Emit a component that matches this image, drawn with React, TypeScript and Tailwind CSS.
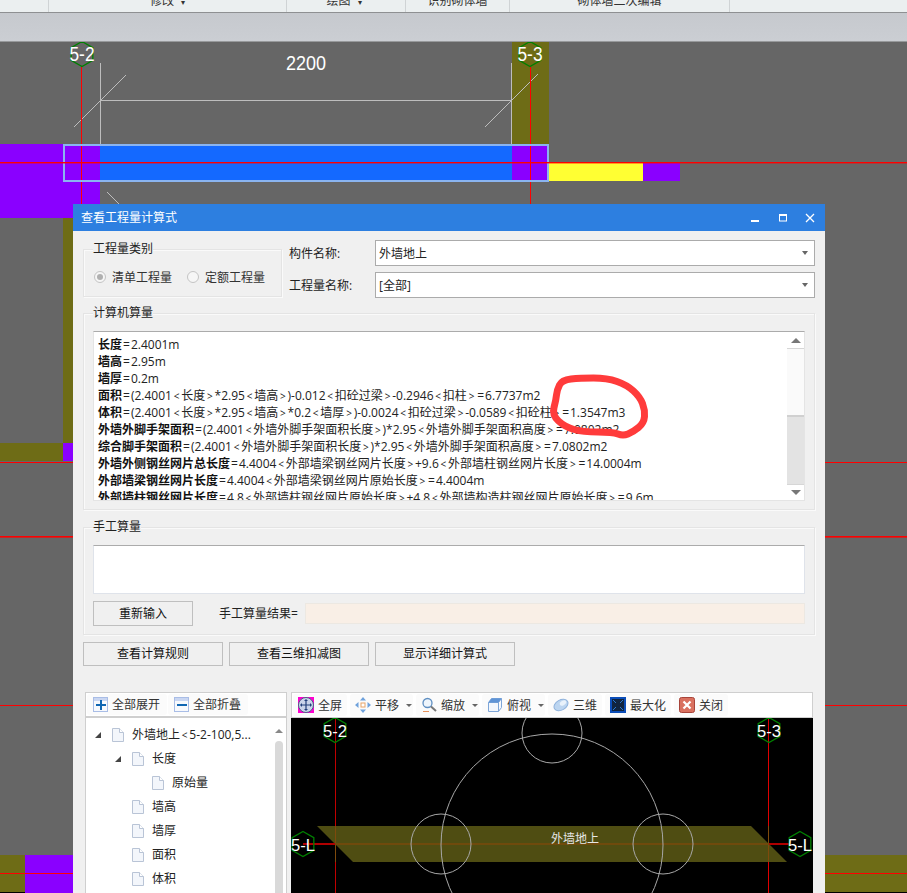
import React from "react";

const hex = (cx: number, cy: number, r = 12.5) =>
  [0, 1, 2, 3, 4, 5]
    .map((i) => {
      const a = (Math.PI / 3) * i - Math.PI / 2;
      return `${cx + r * Math.cos(a)},${cy + r * Math.sin(a)}`;
    })
    .join(" ");

function Axis({ x, y, label, size = 20, len = 25 }: { x: number; y: number; label: string; size?: number; len?: number }) {
  return (
    <g>
      <polygon points={hex(x, y)} fill="none" stroke="#008000" strokeWidth="1.3" />
      <text x={x} y={y + 7} textAnchor="middle" fill="#fff" fontSize={size} textLength={len} lengthAdjust="spacingAndGlyphs" fontFamily="Liberation Sans, sans-serif">
        {label}
      </text>
    </g>
  );
}

function Canvas() {
  return (
    <svg viewBox="0 42 907 851" width="907" height="851" className="block">
      <rect x="0" y="42" width="907" height="851" fill="#666666" />
      <rect x="512" y="42" width="37" height="102" fill="#6e6c16" />
      <rect x="63" y="218" width="10" height="225" fill="#6e6c16" />
      <rect x="0" y="443" width="63" height="18" fill="#6e6c16" />
      <rect x="63" y="443" width="10" height="18" fill="#8a00ff" />
      <rect x="0" y="144" width="63" height="74" fill="#8a00ff" />
      <rect x="63" y="144" width="37" height="74" fill="#8a00ff" />
      <rect x="100" y="144" width="412" height="37" fill="#1469ff" />
      <rect x="512" y="144" width="37" height="37" fill="#8a00ff" />
      <rect x="549" y="163" width="94" height="18" fill="#ffff33" />
      <rect x="643" y="163" width="37" height="18" fill="#8a00ff" />
      <rect x="0" y="855" width="25" height="37" fill="#6e6c16" />
      <rect x="825" y="855" width="82" height="37" fill="#6e6c16" />
      <rect x="0" y="892" width="25" height="1" fill="#000" />
      <rect x="825" y="892" width="82" height="1" fill="#000" />
      <rect x="25" y="855" width="48" height="38" fill="#8a00ff" />
      <line x1="100.5" y1="63" x2="100.5" y2="144" stroke="#bdbdbd" />
      <line x1="511.5" y1="63" x2="511.5" y2="144" stroke="#bdbdbd" />
      <line x1="100" y1="100.5" x2="511" y2="100.5" stroke="#bdbdbd" />
      <line x1="126" y1="75" x2="74" y2="127" stroke="#bdbdbd" />
      <line x1="538" y1="74" x2="485" y2="127" stroke="#bdbdbd" />
      <line x1="107" y1="192" x2="119" y2="204" stroke="#bdbdbd" />
      <line x1="81.5" y1="66" x2="81.5" y2="204" stroke="#ff0000" />
      <line x1="530.5" y1="66" x2="530.5" y2="204" stroke="#ff0000" />
      <rect x="64" y="145" width="484" height="36" fill="none" stroke="#8ab4f0" strokeWidth="2" />
      <rect x="0" y="162" width="907" height="1.4" fill="#ff0000" />
      <rect x="0" y="462" width="907" height="1" fill="#ff0000" />
      <rect x="0" y="536" width="907" height="1.6" fill="#ff0000" />
      <rect x="0" y="705" width="907" height="1" fill="#ff0000" />
      <rect x="0" y="873" width="907" height="1" fill="#ff0000" />
      <Axis x={82} y={54} label="5-2" />
      <Axis x={530} y={54} label="5-3" />
      <text x="306" y="70" textAnchor="middle" fill="#fff" fontSize="21" textLength="40" lengthAdjust="spacingAndGlyphs" fontFamily="Liberation Sans, sans-serif">2200</text>
    </svg>
  );
}

function Viewer() {
  return (
    <svg viewBox="291 718 522 175" width="522" height="175" className="block bg-black">
      <polygon points="317,826 751,826 787,862 353,862" fill="#4f4d12" />
      <rect x="335" y="718" width="1" height="175" fill="#c00000" />
      <rect x="768" y="718" width="1" height="175" fill="#e00000" />
      <rect x="335" y="826" width="1" height="36" fill="#7f4a0c" />
      <rect x="768" y="826" width="1" height="36" fill="#7f4a0c" />
      <rect x="303" y="843" width="32" height="2" fill="#b00000" />
      <rect x="335" y="843" width="434" height="2" fill="#6f4a0c" />
      <rect x="769" y="843" width="20" height="2" fill="#b00000" />
      <g fill="none" stroke="#a8a8a8">
        <circle cx="441" cy="844" r="30" />
        <circle cx="663" cy="844" r="30" />
        <circle cx="552" cy="733" r="30" />
        <circle cx="552" cy="845" r="111" />
      </g>
      <Axis x={335} y={730} label="5-2" size={17} len={24} />
      <Axis x={769} y={730} label="5-3" size={17} len={24} />
      <Axis x={303} y={844} label="5-L" size={17} len={24} />
      <Axis x={800} y={844} label="5-L" size={17} len={24} />
      <text x="575" y="843" textAnchor="middle" fill="#e6e6e6" fontSize="12" fontFamily="Noto Sans CJK SC, sans-serif">外墙地上</text>
    </svg>
  );
}

function Group({ title, className, children }: { title: string; className: string; children?: React.ReactNode }) {
  return (
    <div className={`relative border border-[#e4e4e4] shadow-[inset_1px_1px_0_#fafafa,1px_1px_0_#fafafa] ${className}`}>
      <span className="absolute left-[9px] top-[-9px] bg-[#f0f0f0] leading-[16px] text-[#222]">{title}</span>
      {children}
    </div>
  );
}

function Select({ value }: { value: string }) {
  return (
    <div className="flex h-[26px] w-[440px] items-center justify-between border border-[#ababab] bg-white pl-[3px] pr-[6px] text-[#222]">
      <span className="pt-[1px]">{value}</span>
      <span className="h-0 w-0 border-x-[3px] border-t-[4px] border-x-transparent border-t-[#666]" />
    </div>
  );
}

function Radio({ on, label }: { on?: boolean; label: string }) {
  return (
    <div className="flex items-center gap-[6px]">
      <span className="flex h-[12px] w-[12px] items-center justify-center rounded-full border border-[#c4c4c4] bg-[#f6f6f6]">
        {on && <span className="h-[6px] w-[6px] rounded-full bg-[#b0b0b0]" />}
      </span>
      <span className="pt-[1px] text-[#333]">{label}</span>
    </div>
  );
}

// The symbols < > = sit with extra air around them in the reference's font.
function Spaced({ text }: { text: string }) {
  return (
    <>
      {text.split(/([<>=])/).map((t, i) =>
        t === "<" || t === ">" ? (
          <span key={i} className="mx-[1.8px] text-[10px]">{t}</span>
        ) : t === "=" ? (
          <span key={i} className="mx-[1px]">{t}</span>
        ) : (
          <span key={i}>{t}</span>
        )
      )}
    </>
  );
}

const lines: [string, string][] = [
  ["长度", "=2.4001m"],
  ["墙高", "=2.95m"],
  ["墙厚", "=0.2m"],
  ["面积", "=(2.4001<长度>*2.95<墙高>)-0.012<扣砼过梁>-0.2946<扣柱>=6.7737m2"],
  ["体积", "=(2.4001<长度>*2.95<墙高>*0.2<墙厚>)-0.0024<扣砼过梁>-0.0589<扣砼柱>=1.3547m3"],
  ["外墙外脚手架面积", "=(2.4001<外墙外脚手架面积长度>)*2.95<外墙外脚手架面积高度>=7.0802m2"],
  ["综合脚手架面积", "=(2.4001<外墙外脚手架面积长度>)*2.95<外墙外脚手架面积高度>=7.0802m2"],
  ["外墙外侧钢丝网片总长度", "=4.4004<外部墙梁钢丝网片长度>+9.6<外部墙柱钢丝网片长度>=14.0004m"],
  ["外部墙梁钢丝网片长度", "=4.4004<外部墙梁钢丝网片原始长度>=4.4004m"],
  ["外部墙柱钢丝网片长度", "=4.8<外部墙柱钢丝网片原始长度>+4.8<外部墙构造柱钢丝网片原始长度>=9.6m"],
];

function Btn({ label, w }: { label: string; w: string }) {
  return (
    <div className={`flex items-center justify-center border border-[#bfbfbf] bg-[#f0f0f0] text-[#111] ${w}`}>{label}</div>
  );
}

function SqIcon({ plus }: { plus?: boolean }) {
  return (
    <svg width="15" height="15" viewBox="0 0 15 15">
      <rect x="0.5" y="0.5" width="14" height="14" fill="#f7f9fd" stroke="#a9bde6" />
      <rect x="1" y="1" width="13" height="3" fill="#c9d6f2" />
      <rect x="3" y="7" width="10" height="2" fill="#0f66b3" />
      {plus && <rect x="7" y="3" width="2" height="10" fill="#0f66b3" />}
    </svg>
  );
}

function Icon16({ children }: { children: React.ReactNode }) {
  return (
    <svg width="16" height="16" viewBox="0 0 16 16" className="shrink-0">
      {children}
    </svg>
  );
}

const Full = () => (
  <Icon16>
    <rect width="16" height="16" fill="#ff00d0" />
    <circle cx="8" cy="8" r="7.5" fill="#c9d4ea" stroke="#4c5d85" />
    <path d="M8 3v10M3 8h10" stroke="#23407c" strokeWidth="1.2" />
    <path d="M8 2l2 2H6zM8 14l2-2H6zM2 8l2-2v4zM14 8l-2-2v4z" fill="#23407c" />
  </Icon16>
);
const Pan = () => (
  <Icon16>
    <path d="M8 0l3 3.5H5zM8 16l3-3.5H5zM0 8l3.5-3v6zM16 8l-3.5-3v6z" fill="#6fa2dc" />
    <rect x="6" y="6" width="4" height="4" fill="#fff" stroke="#e8a468" />
  </Icon16>
);
const Zoom = () => (
  <Icon16>
    <circle cx="6.5" cy="6" r="4.5" fill="#eef5fc" stroke="#5f8fc2" strokeWidth="1.3" />
    <path d="M10 9.5l5 4.5" stroke="#777" strokeWidth="2" />
    <path d="M2 14.5h6" stroke="#e8925a" />
  </Icon16>
);
const Top = () => (
  <Icon16>
    <path d="M1.5 5.5h10v9h-10zM1.5 5.5l3-4h10l-3 4M11.5 14.5l3-4v-9" fill="#f2f7fd" stroke="#7ea6d8" />
    <path d="M1.5 5.5l3-4h10l-3 4z" fill="#5f94d6" />
  </Icon16>
);
const Three = () => (
  <Icon16>
    <ellipse cx="8" cy="8" rx="7.5" ry="5" transform="rotate(-30 8 8)" fill="#bcd5f0" stroke="#8fb2dc" />
    <ellipse cx="10" cy="6" rx="3.5" ry="2.2" transform="rotate(-30 10 6)" fill="#e9f2fb" />
  </Icon16>
);
const Maxi = () => (
  <Icon16>
    <rect width="16" height="16" fill="#0b4db8" />
    <rect x="2" y="2" width="12" height="12" fill="#10243f" />
    <path d="M3 3l3 3M13 3l-3 3M3 13l3-3M13 13l-3-3" stroke="#2a77d0" />
  </Icon16>
);
const Close = () => (
  <Icon16>
    <rect x="0.5" y="0.5" width="15" height="15" rx="2" fill="#d9705f" stroke="#a8443a" />
    <path d="M4.5 4.5l7 7M11.5 4.5l-7 7" stroke="#fff" strokeWidth="2.2" />
  </Icon16>
);

function Tool({ icon, label, caret }: { icon: React.ReactNode; label: string; caret?: boolean }) {
  return (
    <div className={`flex h-[22px] items-center rounded-[3px] bg-[#fbfbfb] pl-[5px] ${caret ? "pr-[1px]" : "pr-[5px]"}`}>
      {icon}
      <span className="ml-[4px] pt-[1px] text-[#333]">{label}</span>
      {caret && <span className="ml-[7px] h-0 w-0 border-x-[3px] border-t-[3px] border-x-transparent border-t-[#666]" />}
    </div>
  );
}

function Doc() {
  return (
    <svg width="12" height="14" viewBox="0 0 12 14" className="shrink-0">
      <path d="M0.5 0.5h7l4 4v9h-11z" fill="#f3f6fb" stroke="#b9c4d6" />
      <path d="M7.5 0.5v4h4" fill="#fff" stroke="#b9c4d6" />
    </svg>
  );
}

function Arrow() {
  return <span className="mr-[11px] h-0 w-0 shrink-0 border-b-[6px] border-l-[6px] border-b-[#444] border-l-transparent" />;
}

function TreeRow({ pad, arrow, label }: { pad: string; arrow?: boolean; label: string }) {
  return (
    <div className={`flex h-[24px] items-center whitespace-nowrap ${pad}`}>
      {arrow && <Arrow />}
      <Doc />
      <span className="ml-[8px] text-[#222]"><Spaced text={label} /></span>
    </div>
  );
}

// smooth closed loop through the hand-drawn ring's points
const ring: [number, number][] = [
  [562, 380], [580, 378], [607, 378], [627, 385], [640, 397], [645, 410], [644, 423], [633, 432],
  [623, 436], [613, 432], [583, 432], [565, 427], [552, 415], [556, 400], [557, 390],
];
const ringPath = (() => {
  const mid = (a: [number, number], b: [number, number]) => [(a[0] + b[0]) / 2, (a[1] + b[1]) / 2];
  const n = ring.length;
  const s = mid(ring[n - 1], ring[0]);
  let d = `M${s[0]} ${s[1]}`;
  ring.forEach((p, i) => {
    const m = mid(p, ring[(i + 1) % n]);
    d += ` Q${p[0]} ${p[1]} ${m[0]} ${m[1]}`;
  });
  return d + " Z";
})();

export default function App() {
  return (
    <div className="relative h-[893px] w-[907px] overflow-hidden bg-[#666] font-['Open_Sans','Noto_Sans_CJK_SC',sans-serif] text-[12px]">
      <div className="flex h-[13px] overflow-hidden border-b border-[#8e9092] bg-[#ebeff0] text-[#333]">
        <div className="w-[49px] border-r border-[#cfd3d5]" />
        <div className="flex w-[237px] -translate-y-[5px] justify-center leading-[12px]">
          <span>修改<span className="ml-[7px] text-[8px]">▾</span></span>
        </div>
        <div className="w-px bg-[#cfd3d5]" />
        <div className="flex w-[118px] -translate-y-[5px] justify-center leading-[12px]">
          <span className="mr-[4px]">绘图<span className="ml-[7px] text-[8px]">▾</span></span>
        </div>
        <div className="w-px bg-[#cfd3d5]" />
        <div className="flex w-[103px] -translate-y-[5px] justify-center leading-[12px]">识别砌体墙</div>
        <div className="w-px bg-[#cfd3d5]" />
        <div className="flex w-[219px] -translate-y-[5px] justify-center leading-[12px]">砌体墙二次编辑</div>
        <div className="w-px bg-[#cfd3d5]" />
      </div>
      <div className="h-[29px] border-b border-[#97999b] bg-gradient-to-b from-[#c6c9ce] to-[#cbced3]" />
      <Canvas />

      {/* dialog */}
      <div className="absolute left-[73px] top-[204px] h-[689px] w-[752px] overflow-hidden bg-[#f0f0f0]">
        <div className="flex h-[27px] items-center justify-between bg-[#2d7fe0] pl-[8px] pr-[10px] text-white">
          <span>查看工程量计算式</span>
          <div className="flex items-center gap-[16px]">
            <svg width="12" height="10" viewBox="0 0 12 10"><rect x="2" y="7" width="8" height="2" fill="#fff" /></svg>
            <svg width="12" height="10" viewBox="0 0 12 10"><rect x="2.5" y="2" width="7" height="6" fill="none" stroke="#fff" /><rect x="2" y="1" width="8" height="2" fill="#fff" /></svg>
            <svg width="10" height="10" viewBox="0 0 10 10"><path d="M1 1l8 8M9 1l-8 8" stroke="#fff" strokeWidth="1.3" /></svg>
          </div>
        </div>
        <div className="px-[10px]">
          <div className="flex h-[67px]">
            <Group title="工程量类别" className="mt-[18px] flex h-[48px] w-[199px] items-center gap-[15px] pl-[10px] pt-[8px]">
              <Radio on label="清单工程量" />
              <Radio label="定额工程量" />
            </Group>
            <div className="ml-[7px] flex flex-col gap-[6px] pt-[9px]">
              <div className="flex items-center text-[#222]">
                <span className="w-[86px] pt-[1px]">构件名称:</span>
                <Select value="外墙地上" />
              </div>
              <div className="flex items-center text-[#222]">
                <span className="w-[86px] pt-[1px]">工程量名称:</span>
                <Select value="[全部]" />
              </div>
            </div>
          </div>

          <Group title="计算机算量" className="mt-[15px] h-[197px] w-[732px] pl-[9px] pt-[17px]">
            <div className="flex h-[170px] w-[712px] border border-[#e4e4e4] border-t-[#ababab] bg-white">
              <div className="h-full flex-1 overflow-hidden whitespace-nowrap pl-[4px] pt-[4px] leading-[17px] text-[#222]">
                {lines.map(([a, b]) => (
                  <div key={a} className="h-[17px]">
                    <b className="font-bold text-[#111]">{a}</b>
                    <Spaced text={b} />
                  </div>
                ))}
              </div>
              <div className="flex w-[17px] flex-col bg-[#e3e3e3]">
                <div className="flex h-[17px] items-center justify-center border-b border-[#d6d6d6] bg-white">
                  <span className="h-0 w-0 border-x-[5px] border-b-[5px] border-x-transparent border-b-[#777]" />
                </div>
                <div className="h-[68px] border-b-2 border-[#d0d0d0] bg-[#fafafa]" />
                <div className="flex-1" />
                <div className="flex h-[16px] items-center justify-center border-t border-[#d6d6d6] bg-white">
                  <span className="h-0 w-0 border-x-[5px] border-t-[5px] border-x-transparent border-t-[#777]" />
                </div>
              </div>
            </div>
          </Group>

          <Group title="手工算量" className="mt-[17px] h-[108px] w-[732px] pl-[9px] pt-[17px]">
            <div className="h-[49px] w-[712px] border border-[#dfe3ea] border-t-[#ababab] bg-white" />
            <div className="mt-[7px] flex items-center">
              <Btn label="重新输入" w="h-[25px] w-[100px]" />
              <span className="ml-[26px] w-[86px] text-[#222]">手工算量结果=</span>
              <div className="h-[21px] w-[500px] border border-[#ece8e2] bg-[#f9efe6]" />
            </div>
          </Group>

          <div className="mt-[7px] flex gap-[6px]">
            <Btn label="查看计算规则" w="h-[24px] w-[140px]" />
            <Btn label="查看三维扣减图" w="h-[24px] w-[140px]" />
            <Btn label="显示详细计算式" w="h-[24px] w-[140px]" />
          </div>

          <div className="mt-[26px] flex gap-[4px] pl-[2px]">
            <div className="h-[201px] w-[202px] border-x border-t border-[#cfcfcf] bg-white">
              <div className="flex h-[25px] items-center gap-[1px] border-b-[2px] border-[#cfcfcf] pl-[1px]">
                <div className="flex h-[21px] items-center gap-[4px] rounded-[3px] bg-[#fbfbfb] pl-[6px] pr-[7px] text-[#333]"><SqIcon plus /><span className="pt-[1px]">全部展开</span></div>
                <div className="flex h-[21px] items-center gap-[4px] rounded-[3px] bg-[#fbfbfb] pl-[6px] pr-[7px] text-[#333]"><SqIcon /><span className="pt-[1px]">全部折叠</span></div>
              </div>
              <div className="flex">
                <div className="flex-1 pt-[5px]">
                  <TreeRow pad="pl-[9px]" arrow label="外墙地上<5-2-100,5..." />
                  <TreeRow pad="pl-[29px]" arrow label="长度" />
                  <TreeRow pad="pl-[66px]" label="原始量" />
                  <TreeRow pad="pl-[46px]" label="墙高" />
                  <TreeRow pad="pl-[46px]" label="墙厚" />
                  <TreeRow pad="pl-[46px]" label="面积" />
                  <TreeRow pad="pl-[46px]" label="体积" />
                </div>
                <div className="mr-[3px] flex w-[8px] flex-col items-center pt-[11px]">
                  <span className="h-0 w-0 border-x-[4px] border-b-[4px] border-x-transparent border-b-[#888]" />
                  <div className="mt-[8px] h-[160px] w-[8px] rounded-t-[4px] bg-[#d9d9d9]" />
                </div>
              </div>
            </div>
            <div className="h-[201px] w-[522px] bg-white">
              <div className="flex h-[26px] items-center gap-[3px] border border-[#cfcfcf] pl-[1px]">
                <Tool icon={<Full />} label="全屏" />
                <Tool icon={<Pan />} label="平移" caret />
                <Tool icon={<Zoom />} label="缩放" caret />
                <Tool icon={<Top />} label="俯视" caret />
                <Tool icon={<Three />} label="三维" />
                <Tool icon={<Maxi />} label="最大化" />
                <Tool icon={<Close />} label="关闭" />
              </div>
              <Viewer />
            </div>
          </div>
        </div>
      </div>

      {/* hand-drawn annotation */}
      <svg width="907" height="893" viewBox="0 0 907 893" className="pointer-events-none absolute left-0 top-0">
        <path d={ringPath} fill="none" stroke="#ff3b3b" strokeWidth="7" strokeLinejoin="round" />
      </svg>
    </div>
  );
}
